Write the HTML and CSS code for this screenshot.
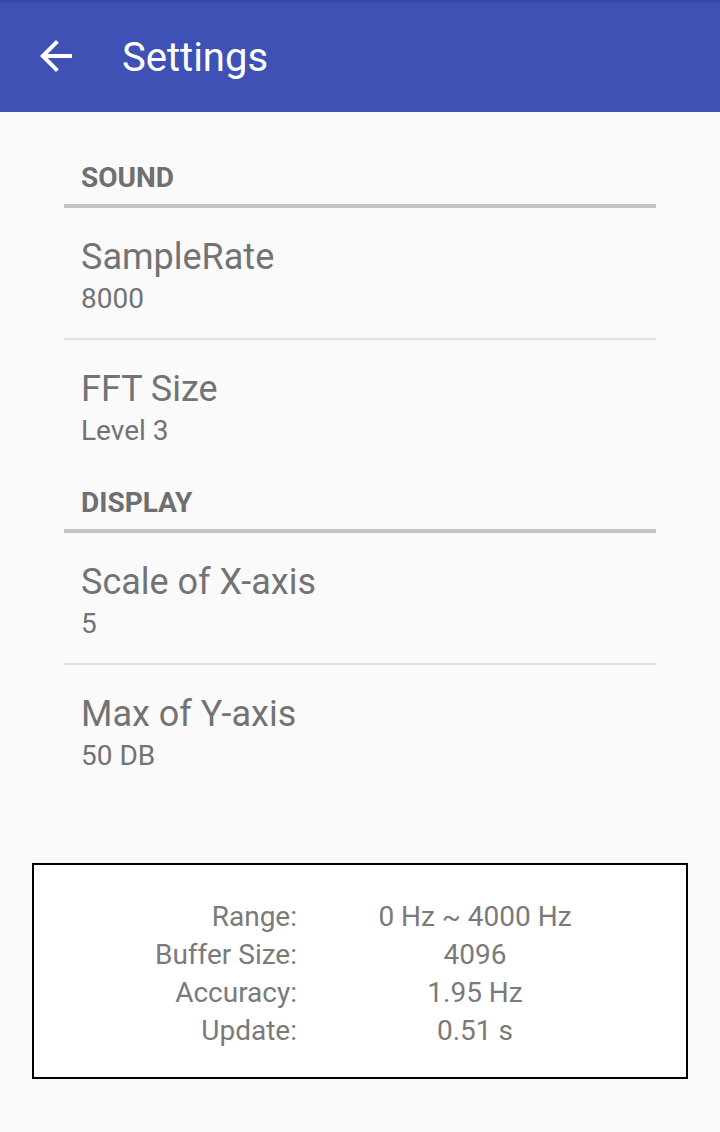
FILE: index.html
```html
<!DOCTYPE html>
<html>
<head>
<meta charset="utf-8">
<link rel="stylesheet" href="styles.css">
</head>
<body>
<header class="appbar">
  <span class="back">
    <svg width="48" height="48" viewBox="0 0 24 24"><path fill="#fff" d="M20 11H7.83l5.59-5.59L12 4l-8 8 8 8 1.41-1.41L7.83 13H20v-2z"/></svg>
  </span>
  <h1 class="title">Settings</h1>
</header>
<main class="list">
  <div class="category first">SOUND</div>
  <div class="cat-divider"></div>
  <div class="pref">
    <div class="pref-title">SampleRate</div>
    <div class="pref-summary">8000</div>
  </div>
  <div class="divider"></div>
  <div class="pref">
    <div class="pref-title">FFT Size</div>
    <div class="pref-summary">Level 3</div>
  </div>
  <div class="category">DISPLAY</div>
  <div class="cat-divider"></div>
  <div class="pref">
    <div class="pref-title">Scale of X-axis</div>
    <div class="pref-summary">5</div>
  </div>
  <div class="divider"></div>
  <div class="pref">
    <div class="pref-title">Max of Y-axis</div>
    <div class="pref-summary">50 DB</div>
  </div>
</main>
<section class="info">
  <div class="info-grid">
    <div class="lbl">Range:</div><div class="val">0 Hz ~ 4000 Hz</div>
    <div class="lbl">Buffer Size:</div><div class="val">4096</div>
    <div class="lbl">Accuracy:</div><div class="val">1.95 Hz</div>
    <div class="lbl">Update:</div><div class="val">0.51 s</div>
  </div>
</section>
</body>
</html>
```
FILE: styles.css
```css
html, body {
  margin: 0;
  padding: 0;
  background: #fafafa;
  font-family: Roboto, "Liberation Sans", sans-serif;
  color: #757575;
}
body {
  width: 720px;
  height: 1132px;
  overflow: hidden;
}
.appbar {
  height: 112px;
  background: linear-gradient(#34449a 0, #3d4fb0 3px, #3f51b5 5px);
  display: flex;
  align-items: center;
}
.back {
  width: 48px;
  height: 48px;
  margin-left: 32px;
  display: flex;
}
.title {
  margin: 3px 0 0 42px;
  font-size: 40px;
  font-weight: 400;
  color: #fff;
  line-height: 48px;
}
.list {
  padding: 0 64px;
}
.category {
  padding: 17px 17px 10px;
  font-size: 28px;
  line-height: 32px;
  font-weight: 700;
  color: #6f6f6f;
}
.category.first {
  padding-top: 50px;
}
.cat-divider {
  height: 4px;
  background: #c4c4c4;
}
.divider {
  height: 2px;
  background: #e0e0e0;
}
.pref {
  padding: 28px 17px 23px;
  display: flex;
  flex-direction: column;
  gap: 5px;
}
.pref-title {
  font-size: 36px;
  line-height: 42px;
  color: #737373;
}
.pref-summary {
  font-size: 28px;
  line-height: 32px;
  color: #737373;
}
.info {
  margin: 68px 32px 0;
  height: 212px;
  border: 2px solid #000;
  background: #fff;
  box-sizing: content-box;
}
.info-grid {
  padding-top: 33px;
  display: grid;
  grid-template-columns: 263px 356px;
  grid-auto-rows: 38px;
  font-size: 28px;
  line-height: 38px;
  color: #7a7a7a;
}
.lbl {
  text-align: right;
}
.val {
  text-align: center;
}
```
